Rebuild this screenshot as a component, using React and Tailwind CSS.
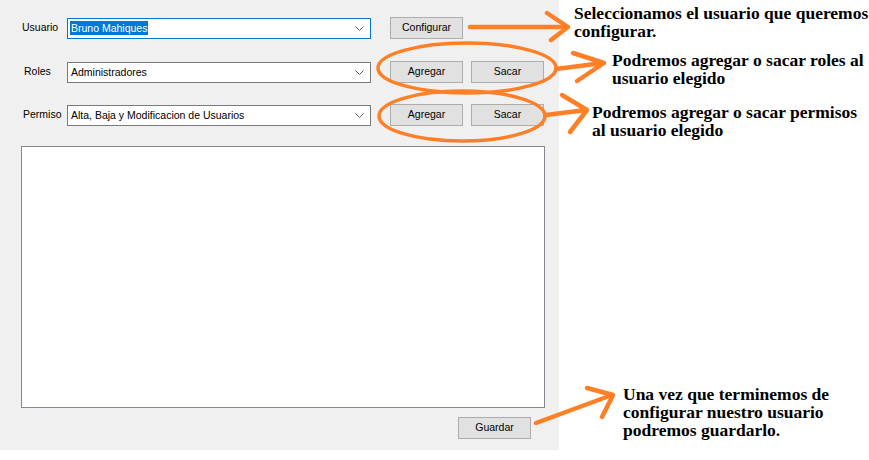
import React from "react";

const ORANGE = "#ff7f27";

function Chevron() {
  return (
    <svg width="9" height="5" viewBox="0 0 9 5" className="shrink-0">
      <path d="M0.5 0.5 L4.5 4.5 L8.5 0.5" fill="none" stroke="#606060" strokeWidth="1" />
    </svg>
  );
}

function Combo({ value, focused, width = "w-[304px]" }) {
  return (
    <div
      className={`${width} h-[21px] flex items-center justify-between bg-white pl-[2px] pr-[6px] border ${
        focused ? "border-[#0078d7]" : "border-[#7a7a7a]"
      }`}
    >
      <span
        className={`leading-[14px] px-[1px] ${focused ? "bg-[#0078d7] text-white" : "text-black"}`}
      >
        {value}
      </span>
      <Chevron />
    </div>
  );
}

function Button({ children }) {
  return (
    <div className="w-[73px] h-[22px] flex items-center justify-center bg-[#e1e1e1] border border-[#adadad] text-black">
      {children}
    </div>
  );
}

function Note({ className, lines }) {
  return (
    <p
      className={`absolute font-['Liberation_Serif','Times_New_Roman',serif] font-bold text-[17.5px] leading-[18px] text-black whitespace-nowrap ${className}`}
    >
      {lines.map((l, i) => (
        <React.Fragment key={l}>
          {i > 0 && <br />}
          {l}
        </React.Fragment>
      ))}
    </p>
  );
}

export default function App() {
  return (
    <div className="relative w-[869px] h-[460px] bg-white overflow-hidden">
      {/* Formulario */}
      <div className="w-[559px] h-[450px] bg-[#f0f0f0] flex flex-col font-['Liberation_Sans',Arial,sans-serif] text-[10.5px] text-black">
        <div className="mt-[17px] h-[22px] flex items-center pl-[22px]">
          <span className="w-[45px]">Usuario</span>
          <Combo value="Bruno Mahiques" focused />
          <div className="ml-[19px]">
            <Button>Configurar</Button>
          </div>
        </div>

        <div className="mt-[22px] h-[22px] flex items-center pl-[24px]">
          <span className="w-[43px]">Roles</span>
          <Combo value="Administradores" />
          <div className="ml-[19px] flex gap-[8px]">
            <Button>Agregar</Button>
            <Button>Sacar</Button>
          </div>
        </div>

        <div className="mt-[21px] h-[22px] flex items-center pl-[23px]">
          <span className="w-[44px]">Permiso</span>
          <Combo value="Alta, Baja y Modificacion de Usuarios" />
          <div className="ml-[19px] flex gap-[8px]">
            <Button>Agregar</Button>
            <Button>Sacar</Button>
          </div>
        </div>

        <div className="mt-[20px] ml-[21px] w-[524px] h-[262px] bg-white border border-[#828790]" />

        <div className="mt-[9px] ml-[458px]">
          <Button>Guardar</Button>
        </div>
      </div>

      {/* Anotaciones */}
      <svg className="absolute inset-0 pointer-events-none" width="869" height="460" viewBox="0 0 869 460">
        <g fill="none" stroke={ORANGE} strokeLinecap="round" strokeLinejoin="round">
          <ellipse cx="467" cy="68" rx="89" ry="25" strokeWidth="3.5" />
          <ellipse cx="462" cy="116" rx="83" ry="25" strokeWidth="3.5" />
          <g strokeWidth="4.5">
            <path d="M470 27 L567 27 M547 13 L568 27 L551 40" />
            <path d="M556 69 L603 63 M573 53 L604 63 L577 81" />
            <path d="M546 115 L586 110 M562 95 L587 110 L570 132" />
            <path d="M536 423 L612 395 M587 388 L613 395 L602 417" />
          </g>
        </g>
      </svg>

      <Note className="left-[574px] top-[4px]" lines={["Seleccionamos el usuario que queremos", "configurar."]} />
      <Note className="left-[612px] top-[51px]" lines={["Podremos agregar o sacar roles al", "usuario elegido"]} />
      <Note className="left-[592px] top-[103px]" lines={["Podremos agregar o sacar permisos", "al usuario elegido"]} />
      <Note
        className="left-[623px] top-[385px]"
        lines={["Una vez que terminemos de", "configurar nuestro usuario", "podremos guardarlo."]}
      />
    </div>
  );
}
